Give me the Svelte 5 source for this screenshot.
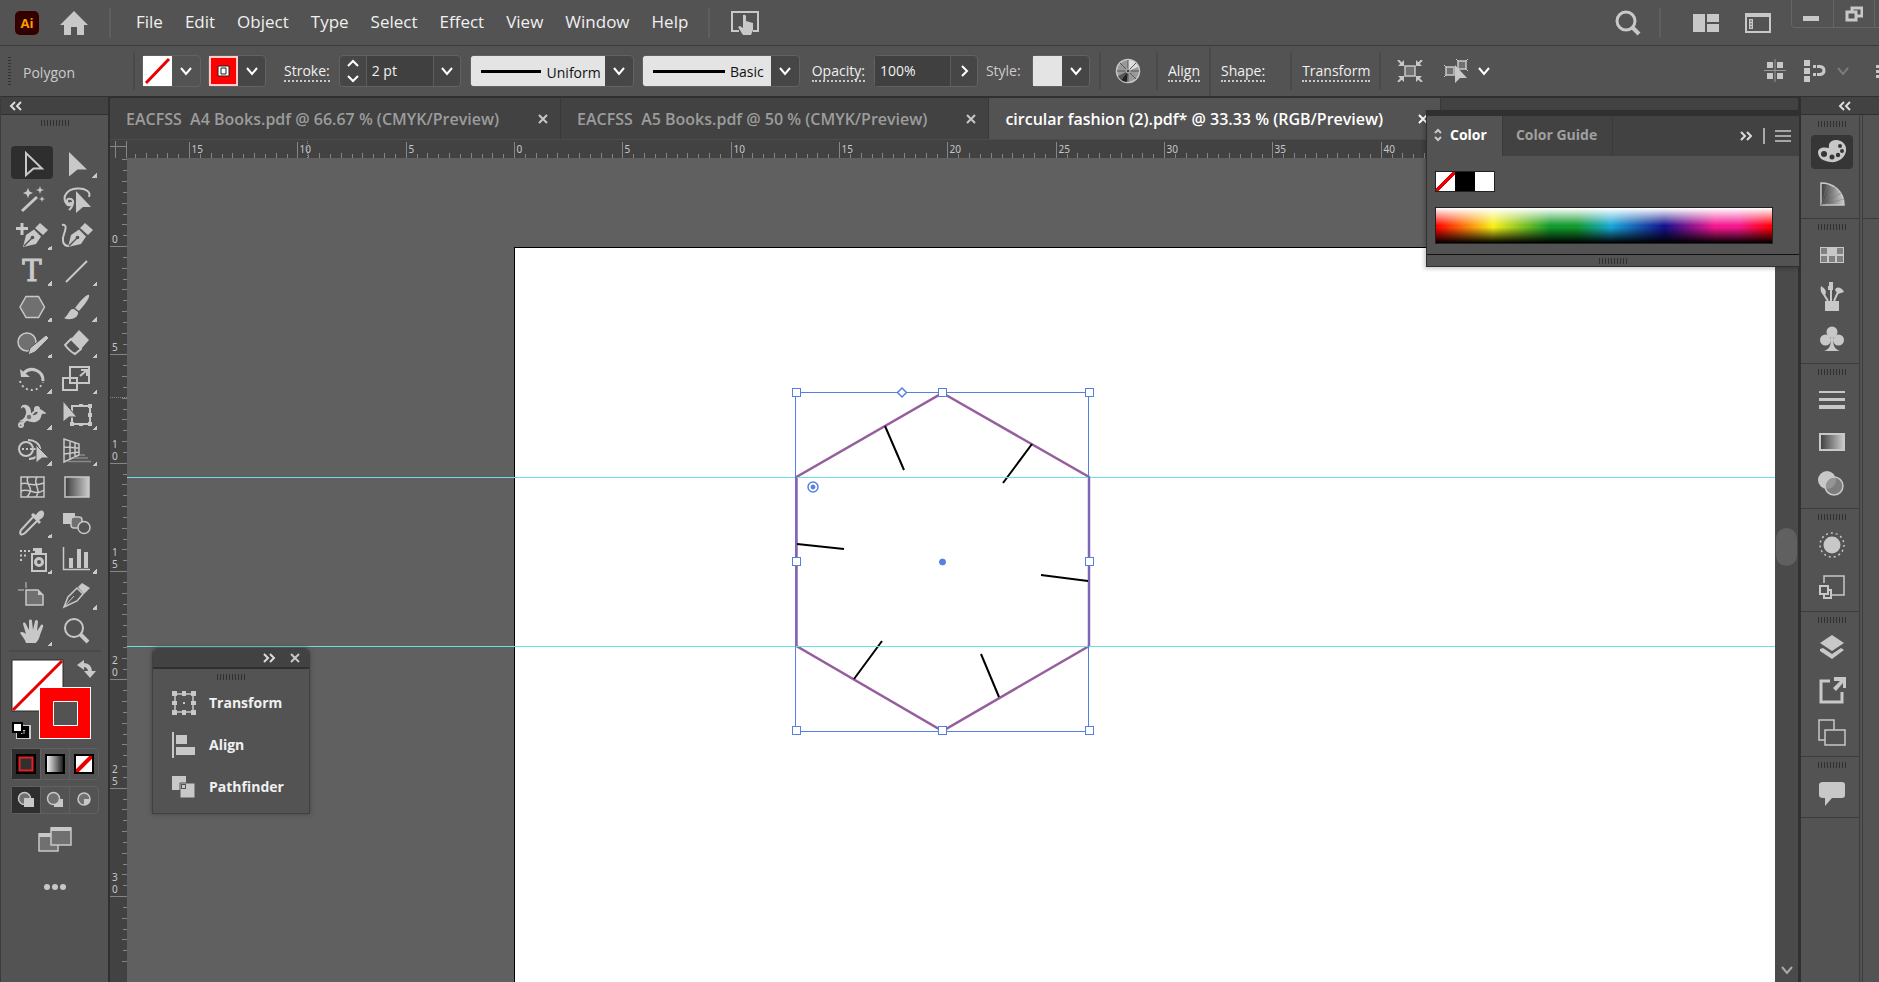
<script lang="ts">
type Item = { name: string; icon: string; more?: boolean };

const menus = ['File', 'Edit', 'Object', 'Type', 'Select', 'Effect', 'View', 'Window', 'Help'];

const tabs = [
  'EACFSS  A4 Books.pdf @ 66.67 % (CMYK/Preview)',
  'EACFSS  A5 Books.pdf @ 50 % (CMYK/Preview)',
  'circular fashion (2).pdf* @ 33.33 % (RGB/Preview)',
];

let activeTab = $state(2);
let activeTool = $state('Selection');
let strokeWidth = $state('2 pt');
let opacity = $state('100%');
let canvasWidth = $state(0);
let canvasHeight = $state(0);

const nib =
  '<path d="M7 28 10 16 18 10.500 25 17.500 20 25Z M19 9 24 4 32 11 27 16Z" /><path d="M8 27 16 19" stroke="#535353" stroke-width="1.500" /><circle cx="16.500" cy="18.500" r="1.800" fill="#535353" />';

const tools: Item[] = [
  { name: 'Selection', icon: '<path d="M10 6V28L17.500 21.500H26Z" class="line" />' },
  { name: 'Direct Selection', more: true, icon: '<path d="M8 5V29.500L16.500 22.500H26Z" />' },
  {
    name: 'Magic Wand',
    icon: '<path d="M6 28 21 14" class="line" stroke-width="3" /><path d="M12 5 13.500 8.500 17 10 13.500 11.500 12 15 10.500 11.500 7 10 10.500 8.500Z M24 3 25 6 28 7 25 8 24 11 23 8 20 7 23 6Z M26 13 26.800 15.200 29 16 26.800 16.800 26 19 25.200 16.800 23 16 25.200 15.200Z" />',
  },
  {
    name: 'Lasso',
    icon: '<path d="M5 20C1 14 6 6 16 5.500 25 5 30 9 28 14M5 20C7 24 13 22 12 18 11 15 6 15 6 18 6 21 10 21 10 19M12 19C12 24 10 25 8 27" class="line" /><path d="M15 8V30L22 24H30Z" />',
  },
  { name: 'Pen', more: true, icon: `<path d="M0 9.500H12M6 4V16" class="line" stroke-width="3" />${nib}` },
  { name: 'Curvature', icon: `<path d="M1 6C6 5 5 10 3 15S1 27 8 27" class="line" />${nib}` },
  {
    name: 'Type',
    more: true,
    icon: '<text x="16" y="26" text-anchor="middle" font-family="DejaVu Serif, serif" font-size="29" stroke="#c8c8c8" stroke-width="1">T</text>',
  },
  { name: 'Line Segment', more: true, icon: '<path d="M5 27 26 6" class="line" />' },
  { name: 'Polygon', more: true, icon: '<path d="M4 16 10 5.500H22.500L28.500 16 22.500 26.500H10Z" class="shade" />' },
  {
    name: 'Paintbrush',
    more: true,
    icon: '<path d="M28 4C26 3 21 8 14 17L18 20C24 13 29 7 28 4Z" /><path d="M13 18C8 17 8 24 3 27 9 30 18 27 17 21Z" />',
  },
  {
    name: 'Shaper',
    more: true,
    icon: '<circle cx="11" cy="15" r="9" class="shade" /><path d="M30 8 33 11 19 25 12 28 14 21Z" stroke="#535353" />',
  },
  {
    name: 'Eraser',
    more: true,
    icon: '<path d="M18 3 28 13 20 22 10 12Z" /><path d="M10 12 4 18C7 22 10 25 14 27L20 22Z" class="line" />',
  },
  {
    name: 'Rotate',
    more: true,
    icon: '<path d="M8 10A11 11 0 0 1 27 18" class="line" stroke-width="3" /><path d="M4 6 5 14 14 14Z" /><path d="M4 18A12 12 0 0 0 27 19" class="line" stroke-dasharray="2 3" />',
  },
  {
    name: 'Scale',
    more: true,
    icon: '<path d="M9 4H28V20H9ZM2 15H16V27H2ZM19 13 25 8M20 7H26V13" class="line" />',
  },
  {
    name: 'Width',
    more: true,
    icon: '<path d="M5 10C4 4 15 4 15 13 15 18 22 17 22 11 24 8 27 12 30 14 29 17 26 12 25 18 23 24 16 24 12 22 9 21 6 24 3 22 7 21 11 17 10 12 9 8 7 7 5 10Z" /><path d="M5 26 22 9" class="line" stroke="#c8c8c8" /><circle cx="5" cy="26" r="2" class="line" /><circle cx="21" cy="10" r="2" class="line" /><circle cx="13" cy="18" r="3" class="shade" />',
  },
  {
    name: 'Free Transform',
    more: true,
    icon: '<path d="M11 7H29V25H11Z" class="line" /><path d="M2 2V23L8 18H16Z" stroke="#535353" /><path d="M18 5H22V8H18ZM27 5H31V9H27ZM27 14H31V18H27ZM27 23H31V27H27ZM18 24H22V27H18ZM9 23H13V27H9Z" />',
  },
  {
    name: 'Shape Builder',
    more: true,
    icon: '<path d="M12 5A11 9 0 1 1 13 24" class="line" /><circle cx="10" cy="14" r="7" class="line" /><path d="M6 14H24" class="line" stroke-dasharray="2 2" /><path d="M20 10V28L26 23H33Z" stroke="#535353" />',
  },
  {
    name: 'Perspective Grid',
    more: true,
    icon: '<path d="M3 4V27L18 20V9ZM3 12 18 13M3 19 18 17M9 7V24M14 8V22" class="line" stroke-width="1.500" /><path d="M19 20H24M13 23H27M7 26.500H30" stroke="#888" stroke-width="1.500" />',
  },
  {
    name: 'Mesh',
    icon: '<path d="M5 6H28V26H5ZM5 13C12 10 14 17 28 12M5 20C14 16 18 26 28 19M12 6C8 14 20 16 11 26M21 6C16 13 26 18 20 26" class="line" stroke-width="1.500" />',
  },
  { name: 'Gradient', icon: '<path d="M4 6H28V26H4Z" fill="url(#ramp)" stroke="#c8c8c8" stroke-width="1.500" />' },
  {
    name: 'Eyedropper',
    more: true,
    icon: '<path d="M18 9 5 23C3 27 5 29 9 26L22 13" class="line" /><path d="M15 8 17 6 20 8C23 2 29 2 28 8 27 11 25 12 23 13L25 15 23 17Z" />',
  },
  {
    name: 'Blend',
    icon: '<path d="M2 6H14V17H2Z" /><rect x="10" y="10" width="11" height="11" rx="3" class="shade" /><circle cx="23" cy="20.500" r="6" fill="#535353" stroke="#c8c8c8" stroke-width="1.500" />',
  },
  {
    name: 'Symbol Sprayer',
    more: true,
    icon: '<path d="M4 8H16M4 12.500H12M4 17H7" class="line" stroke-dasharray="2 2" /><path d="M16 11H30V28H16Z" class="line" /><path d="M19 5H26V10H19ZM17 5H19V8H17Z" /><circle cx="23" cy="19" r="3.500" class="line" stroke-width="3" />',
  },
  {
    name: 'Column Graph',
    more: true,
    icon: '<path d="M2.500 4V26.500H29" class="line" stroke-width="1.500" /><path d="M8 15H12V25H8ZM16 6H20V25H16ZM23 9H27V25H23Z" />',
  },
  {
    name: 'Artboard',
    icon: '<path d="M10 11H22L27 16V26H10Z" class="shade" /><path d="M2 11H8M10 3V9" class="line" stroke-width="1" /><path d="M22 11V16H27Z" />',
  },
  {
    name: 'Slice',
    more: true,
    icon: '<path d="M3 28 7 18 16 9 22 15 16 22Z" class="line" stroke-width="1.500" /><path d="M17 8 21 4 29 9 23 15Z" /><path d="M3 28 13 17" class="line" stroke-width="1" />',
  },
  {
    name: 'Hand',
    more: true,
    icon: '<path d="M10 28C9 24 6 21 4 18 5 16 8 17 10 19L7 9C7 7 9 7 10 9L13 15 13 6C13 4 16 4 16 6L17 15 19 6C20 4 22 5 22 7L21 16 25 10C26 9 28 10 27 12L24 20C23 25 21 26 20 28Z" />',
  },
  {
    name: 'Zoom',
    icon: '<circle cx="13" cy="13" r="9" class="line" /><path d="M19.500 19.500 27 27" class="line" stroke-width="4" />',
  },
];

const dock: Item[][] = [
  [
    {
      name: 'Color',
      icon: '<path d="M13 12C12 5 17 4 21 4 27 5 31 9 30 15 29 22 22 27 14 26 7 25 2 22 2 16 3 11 8 11 13 12Z" /><g fill="#363636"><circle cx="8" cy="18" r="3" /><circle cx="16" cy="21" r="2.500" /><circle cx="22" cy="19" r="2.200" /><circle cx="26" cy="15" r="2" /><circle cx="24" cy="10" r="2" /></g>',
    },
    {
      name: 'Color Guide',
      icon: '<path d="M5 5C17 5 28 13 28 27H5Z" fill="url(#ramp)" stroke="#c8c8c8" stroke-width="1.500" /><path d="M5 27 12 6M5 27 19 9M5 27 25 15M5 27 28 21" stroke="#777" stroke-width=".5" />',
    },
  ],
  [
    {
      name: 'Swatches',
      icon: '<path d="M4 8H28V24H4Z" /><path d="M5 9H11V15H5ZM21 9H27V15H21ZM5 17H11V23H5ZM13 17H19V23H13ZM21 17H27V23H21Z" fill="#808080" />',
    },
    {
      name: 'Brushes',
      icon: '<path d="M9 20H23V30H9ZM13 1H17V9H12V5H13Z" /><path d="M15 9V20M7 12 12 20M22 11 18 20" class="line" /><path d="M5 5C10 8 11 11 9 14 5 13 4 10 5 5ZM19 9C20 5 26 6 28 11L22 13Z" />',
    },
    {
      name: 'Symbols',
      icon: '<circle cx="16" cy="9" r="5.500" /><circle cx="9.500" cy="17" r="5.500" /><circle cx="22.500" cy="17" r="5.500" /><path d="M15 14H17C17 22 18 26 24 28H8C14 26 15 22 15 14Z" />',
    },
  ],
  [
    { name: 'Stroke', icon: '<path d="M3 7H29V9H3ZM3 14H29V17H3ZM3 21H29V25H3Z" />' },
    { name: 'Gradient Panel', icon: '<path d="M4 8H28V24H4Z" fill="url(#ramp)" stroke="#c8c8c8" stroke-width="2" />' },
    {
      name: 'Transparency',
      icon: '<circle cx="11" cy="12" r="9" /><circle cx="18" cy="18" r="9" fill="#888" fill-opacity=".8" stroke="#c8c8c8" stroke-width="1.500" />',
    },
  ],
  [
    {
      name: 'Appearance',
      icon: '<circle cx="16" cy="16" r="8.500" /><circle cx="16" cy="16" r="12" class="line" stroke-width="1.500" stroke-dasharray="2 3" />',
    },
    { name: 'Graphic Styles', icon: '<path d="M8 12V5H28V24H16" class="line" stroke-width="1.500" /><path d="M4 15H12V23H4ZM8 23V27H15V19H12" class="line" />' },
  ],
  [
    { name: 'Layers', icon: '<path d="M16 3 28 11 16 19 4 11Z M4 17 7 16 16 22 25 16 28 18 16 27 4 19Z" />' },
    { name: 'Asset Export', icon: '<path d="M14 7H5V28H26V18" class="line" stroke-width="3" /><path d="M18 3H30V14H27V9L20 17 17 14 24 7H18Z" />' },
    { name: 'Artboards', icon: '<path d="M9 24H3V4H18V14M9 14H29V29H9Z" class="line" stroke-width="1.500" />' },
  ],
  [{ name: 'Comments', icon: '<path d="M7 5H26Q29 5 29 8V18Q29 21 26 21H16L9 29V21H7Q3 21 3 18V8Q3 5 7 5Z" />' }],
];

const floating: Item[] = [
  {
    name: 'Transform',
    icon: '<path d="M7 7H25V25H7Z" class="line" stroke-width="1.500" /><path d="M4 4H9V9H4ZM14 4H18V9H14ZM23 4H28V9H23ZM4 14H9V18H4ZM23 14H28V18H23ZM4 23H9V28H4ZM14 23H18V28H14ZM23 23H28V28H23ZM15 15H17V17H15Z" />',
  },
  { name: 'Align', icon: '<path d="M4 3H6V29H4ZM8 6H19V15H8ZM8 18H27V26H8Z" />' },
  {
    name: 'Pathfinder',
    icon: '<path d="M4 5H18V19H4Z" /><path d="M12 12H27V27H12Z" stroke="#535353" /><path d="M13 13H18V18H13Z" fill="#535353" /><path d="M14 14H17V17H14Z" />',
  },
];

// Ruler geometry, in screen pixels. Ten divisions for every five units.
const step = 65 / 6;
const originX = 387;
const originY = 88;
const isMajor = (i: number) => i % 10 === 0;

function ticks(origin: number, length: number) {
  const first = -Math.floor(origin / step);
  const last = Math.floor((length - 12 - origin) / step);
  return Array.from({ length: Math.max(0, last - first + 1) }, (_, n) => first + n);
}

const xTicks = $derived(ticks(originX, canvasWidth));
const yTicks = $derived(ticks(originY, canvasHeight));

const cuts = [
  [370, 179, 389, 223],
  [517, 197, 488, 236],
  [282, 297, 329, 302],
  [526, 328, 573, 334],
  [367, 394, 339, 432],
  [466, 407, 484, 450],
];

const handles = [
  [281, 146], [427, 146], [574, 146],
  [281, 315], [574, 315],
  [281, 484], [427, 484], [574, 484],
];
</script>

{#snippet chevron()}
  <svg class="chevron" viewBox="0 0 14 14" aria-hidden="true"><path d="M2 4 7 10 12 4" /></svg>
{/snippet}

{#snippet double(back = false)}
  <svg class="double" viewBox="0 0 14 10" aria-hidden="true">
    <path d={back ? 'M6 1 2 5 6 9M12 1 8 5 12 9' : 'M2 1 6 5 2 9M8 1 12 5 8 9'} />
  </svg>
{/snippet}

{#snippet cross()}
  <svg class="cross" viewBox="0 0 12 12" aria-hidden="true"><path d="M2 2 10 10M10 2 2 10" /></svg>
{/snippet}

{#snippet glyph(icon: string)}
  <svg class="glyph" viewBox="0 0 32 32" aria-hidden="true">{@html icon}</svg>
{/snippet}

<svg class="defs" aria-hidden="true">
  <defs>
    <linearGradient id="ramp"><stop stop-color="#3c3c3c" /><stop offset="1" stop-color="#ccc" /></linearGradient>
    <linearGradient id="ramp-light"><stop stop-color="#fff" /><stop offset="1" stop-color="#111" /></linearGradient>
  </defs>
</svg>

<div class="app">
  <header class="menubar">
    <span class="logo">Ai</span>
    <button type="button" class="home" aria-label="Home">
      <svg width="28" height="26" viewBox="0 0 28 26"><path d="M14 1 28 15H24V25H17V17H11V25H4V15H0Z" /></svg>
    </button>
    <span class="rule"></span>
    <nav>
      {#each menus as menu}
        <button type="button">{menu}</button>
      {/each}
    </nav>
    <span class="rule"></span>
    <button type="button" class="touch" aria-label="Touch workspace">
      <svg width="28" height="24" viewBox="0 0 28 24">
        <path d="M8 20H1V1H27V20H22" class="line" />
        <path d="M12 4Q14 3 15 5V10L22 12V19L20 24H12L7 16 9 15 12 17Z" />
      </svg>
    </button>
    <div class="window-side">
      <button type="button" aria-label="Search">
        <svg width="26" height="26" viewBox="0 0 26 26">
          <circle cx="11" cy="11" r="9" class="line" stroke-width="3" /><path d="M17 17 24 24" class="line" stroke-width="4" />
        </svg>
      </button>
      <span class="rule"></span>
      <button type="button" aria-label="Arrange documents">
        <svg width="26" height="18" viewBox="0 0 26 18"><path d="M0 0H12V18H0ZM14 0H26V8H14ZM14 10H26V18H14Z" /></svg>
      </button>
      <button type="button" aria-label="Switch workspace">
        <svg width="26" height="20" viewBox="0 0 26 20">
          <path d="M1 1H25V19H1Z" class="line" /><path d="M1 1H25V4H1ZM4 6H8V16H4Z" /><path d="M5 8H7M5 11H7M5 14H7" stroke="#535353" />
        </svg>
      </button>
      <div class="window-buttons">
        <button type="button" aria-label="Minimize">
          <svg width="16" height="16" viewBox="0 0 16 16"><path d="M0 10H16V15H0Z" /></svg>
        </button>
        <button type="button" aria-label="Restore">
          <svg width="18" height="16" viewBox="0 0 18 16"><path d="M7 5V2H17V10H12M2 6H11V14H2Z" class="line" stroke-width="3" /></svg>
        </button>
      </div>
    </div>
  </header>

  <section class="controlbar" aria-label="Control">
    <span class="dots"></span>
    <span class="kind">Polygon</span>
    <span class="rule"></span>
    <button type="button" class="field fill-picker" aria-label="Fill">
      <svg class="chip" viewBox="0 0 29 30"><path d="M0 0H29V30H0Z" fill="#fff" /><path d="M3 27 26 3" stroke="#e60000" stroke-width="3" /></svg>
      {@render chevron()}
    </button>
    <button type="button" class="field stroke-picker" aria-label="Stroke color">
      <svg class="chip" viewBox="0 0 29 30">
        <path d="M1 1H28V29H1Z" fill="red" stroke="#fcc" stroke-width="2" /><path d="M9 10H20V20H9Z" fill="#fff" stroke="#222" /><path d="M12 12H17V18H12Z" fill="#fff" stroke="#222" />
      </svg>
      {@render chevron()}
    </button>
    <label class="link" for="stroke-width">Stroke:</label>
    <div class="field stepper">
      <button type="button" aria-label="Change stroke width">
        <svg width="14" height="24" viewBox="0 0 14 24"><path d="M2 7 7 2 12 7M2 17 7 22 12 17" class="line" stroke="#fff" /></svg>
      </button>
      <input id="stroke-width" type="text" bind:value={strokeWidth} />
      <button type="button" aria-label="Stroke presets">{@render chevron()}</button>
    </div>
    <div class="field profile">
      <span class="profile-line"></span>
      <select aria-label="Width profile"><option>Uniform</option></select>
      {@render chevron()}
    </div>
    <div class="field profile brush">
      <span class="profile-line"></span>
      <select aria-label="Brush definition"><option>Basic</option></select>
      {@render chevron()}
    </div>
    <label class="link opacity-label" for="opacity">Opacity:</label>
    <div class="field opacity">
      <input id="opacity" type="text" bind:value={opacity} />
      <button type="button" aria-label="Opacity slider">
        <svg width="14" height="14" viewBox="0 0 14 14"><path d="M5 2 10 7 5 12" class="line" stroke="#fff" /></svg>
      </button>
    </div>
    <span class="style-label">Style:</span>
    <button type="button" class="field style-picker" aria-label="Graphic style">
      <span class="chip style-chip"></span>
      {@render chevron()}
    </button>
    <span class="rule wide"></span>
    <button type="button" aria-label="Recolor artwork">
      <svg width="26" height="26" viewBox="0 0 26 26">
        <circle cx="13" cy="13" r="11.500" fill="#999" stroke="#c8c8c8" stroke-width="1.500" />
        <path d="M13 13V2A11 11 0 0 1 23 9Z" fill="#ddd" /><path d="M13 13 6 22A11 11 0 0 0 12 24Z" fill="#222" /><path d="M13 13 3 18A11 11 0 0 0 6 22Z" fill="#555" />
        <path d="M13 2V24M2 13H24M5 5 21 21M21 5 5 21" stroke="#555" /><circle cx="13" cy="13" r="2" fill="#444" stroke="#c8c8c8" />
      </svg>
    </button>
    <span class="rule wide"></span>
    <button type="button" class="link">Align</button>
    <span class="rule tall"></span>
    <button type="button" class="link">Shape:</button>
    <span class="rule gap"></span>
    <button type="button" class="link">Transform</button>
    <span class="rule"></span>
    <button type="button" class="isolate" aria-label="Isolate selected object">
      <svg width="26" height="22" viewBox="0 0 26 22">
        <path d="M8 6H18V16H8Z" class="shade" /><path d="M1 0 5 4M25 0 21 4M1 22 5 18M25 22 21 18" class="line" /><path d="M7 0V6H1ZM19 0V6H25ZM7 22V16H1ZM19 22V16H25Z" />
      </svg>
    </button>
    <button type="button" class="similar" aria-label="Select similar objects">
      <svg width="25" height="24" viewBox="0 0 25 24">
        <path d="M2 8H10V16H2ZM14 2H22V10H14Z" class="shade" /><path d="M0 6 3 9M0 18 3 15M12 0 15 3M24 0 21 3M24 12 21 9" class="line" stroke-width="1" /><path d="M11 6V24L16 19H23Z" />
      </svg>
      {@render chevron()}
    </button>
    <div class="control-side">
      <button type="button" aria-label="Align to pixel grid">
        <svg width="22" height="24" viewBox="0 0 22 24"><path d="M3 3H9V9H3ZM13 3H19V9H13ZM3 14H9V20H3ZM13 14H19V20H13Z" /><path d="M11 0V23M0 11.500H22" stroke="#999" /></svg>
      </button>
      <button type="button" class="snap" aria-label="Snap options">
        <svg width="22" height="22" viewBox="0 0 22 22"><path d="M0 0H6V6H0ZM0 8H6V14H0ZM0 16H6V22H0ZM9 5H12V8H9ZM9 13H12V16H9Z" /><path d="M13 6.500H16Q20 7 20 10.500T16 14.500H13" class="line" stroke-width="3" /></svg>
        {@render chevron()}
      </button>
      <button type="button" aria-label="Control bar menu">
        <svg width="3" height="14" viewBox="0 0 3 14"><path d="M0 1H3V4H0ZM0 6H3V9H0ZM0 11H3V14H0Z" /></svg>
      </button>
    </div>
  </section>

  <main>
    <aside class="tools" aria-label="Tools">
      <button type="button" class="strip collapse" aria-label="Collapse tools">{@render double(true)}</button>
      <span class="grip"></span>
      <div class="tool-grid">
        {#each tools as tool}
          <button
            type="button"
            class="tool"
            class:active={activeTool === tool.name}
            class:more={tool.more}
            aria-label={tool.name}
            onclick={() => (activeTool = tool.name)}
          >
            {@render glyph(tool.icon)}
          </button>
        {/each}
      </div>
      <hr />
      <button type="button" class="paint" aria-label="Fill and stroke">
        <svg width="88" height="80" viewBox="0 0 88 80">
          <path d="M1 1H52V52H1Z" fill="#fff" stroke="#2a2a2a" /><path d="M2 51 51 2" stroke="#e60000" stroke-width="3" />
          <path d="M28 28H80V80H28Z" fill="#fff" /><path d="M29 29H79V79H29Z" fill="red" /><path d="M42.500 42.500H66.500V66.500H42.500Z" fill="#535353" stroke="#fff" />
          <path d="M72 6Q79 6 79 13" class="line" stroke-width="4" /><path d="M66 6 73 1V11ZM73 12H85L79 19Z" />
          <path d="M8 69H17V78H8Z" fill="none" stroke="#c8c8c8" stroke-width="6" /><path d="M8 69H16V77H8Z" fill="none" stroke="#000" stroke-width="4" /><path d="M2 64H11V73H2Z" fill="#fff" stroke="#000" stroke-width="2" />
        </svg>
      </button>
      <div class="triple">
        <button type="button" class="on" aria-label="Color">
          <svg width="20" height="20" viewBox="0 0 20 20"><path d="M0 0H20V20H0Z" fill="#000" /><path d="M3.500 3.500H16.500V16.500H3.500Z" fill="#303030" stroke="#e62020" stroke-width="2" /></svg>
        </button>
        <button type="button" aria-label="Gradient fill">
          <svg width="20" height="20" viewBox="0 0 20 20"><path d="M1 1H19V19H1Z" fill="url(#ramp-light)" stroke="#000" stroke-width="2" /></svg>
        </button>
        <button type="button" aria-label="None">
          <svg width="20" height="20" viewBox="0 0 20 20"><path d="M1 1H19V19H1Z" fill="#fff" /><path d="M2 18 18 2" stroke="#e60000" stroke-width="4" /><path d="M1 1H19V19H1Z" fill="none" stroke="#000" stroke-width="2" /></svg>
        </button>
      </div>
      <div class="triple low">
        <button type="button" class="on" aria-label="Draw normal">
          <svg width="18" height="18" viewBox="0 0 18 18"><circle cx="7.500" cy="7.500" r="6" class="shade" /><path d="M7 7H17V16H7Z" /></svg>
        </button>
        <button type="button" aria-label="Draw behind">
          <svg width="18" height="18" viewBox="0 0 18 18"><path d="M8 8H17V16H8Z" /><circle cx="7.500" cy="7.500" r="6" class="shade" /></svg>
        </button>
        <button type="button" aria-label="Draw inside">
          <svg width="18" height="18" viewBox="0 0 18 18"><circle cx="9" cy="8" r="6" class="shade" /><path d="M9 8H15Q15 14 9 14Z" /></svg>
        </button>
      </div>
      <button type="button" class="screen-mode" aria-label="Change screen mode">
        <svg width="34" height="26" viewBox="0 0 34 26">
          <path d="M1 7H20V24H1Z" class="shade" /><path d="M1 6H20V10H1Z" /><path d="M13 1H33V18H13Z" class="shade" /><path d="M13 0H33V4H13Z" />
        </svg>
      </button>
      <button type="button" class="more-tools" aria-label="Edit toolbar">
        <svg width="22" height="6" viewBox="0 0 22 6"><circle cx="3" cy="3" r="3" /><circle cx="11" cy="3" r="3" /><circle cx="19" cy="3" r="3" /></svg>
      </button>
    </aside>

    <section class="document">
      <div class="tabs" role="tablist">
        {#each tabs as tab, i}
          <div class="tab" class:active={activeTab === i}>
            <button type="button" role="tab" aria-selected={activeTab === i} onclick={() => (activeTab = i)}>{tab}</button>
            <button type="button" aria-label="Close document">{@render cross()}</button>
          </div>
        {/each}
      </div>

      <svg class="ruler corner" aria-hidden="true"><path d="M5.500 1V18M0 6.500H17M16.500 1V18" /></svg>
      <svg class="ruler across" aria-hidden="true">
        {#each xTicks as i}
          {@const x = Math.round(originX + i * step) + 0.5}
          <path d="M{x} {isMajor(i) ? 2 : i % 2 ? 14 : 13}V18" />
          {#if isMajor(i)}<text x={x + 2} y="13">{Math.abs(i / 2)}</text>{/if}
        {/each}
        <path d="M180.500 1V18" stroke-dasharray="1 1" />
      </svg>
      <svg class="ruler down" aria-hidden="true">
        {#each yTicks as i}
          {@const y = Math.round(originY + i * step) + 0.5}
          {@const digits = [...String(Math.abs(i / 2))]}
          <path d="M{isMajor(i) ? 0 : i % 2 ? 13 : 12} {y}H17" />
          {#if isMajor(i)}
            {#each digits as digit, d}
              <text x="2" y={y - 4 - (digits.length - 1 - d) * 12}>{digit}</text>
            {/each}
          {/if}
        {/each}
        <path d="M0 239.500H17" stroke-dasharray="1 1" />
      </svg>

      <div class="canvas" bind:clientWidth={canvasWidth} bind:clientHeight={canvasHeight}>
        <svg class="art" aria-label="Artboard">
          <g transform="translate(388 89)">
            <rect x="-.5" y=".5" width="3000" height="2000" fill="#fff" stroke="#000" />
            <path d="M427.500 146 574 230V399L427.500 484 281.500 399V230Z" fill="none" stroke="#955f9c" stroke-width="2.500" />
            {#each cuts as [x1, y1, x2, y2]}
              <line {x1} {y1} {x2} {y2} stroke="#000" stroke-width="2" />
            {/each}
          </g>
          <path d="M0 319.500H3400M0 488.500H3400" stroke="#6adfe6" />
          <g transform="translate(388 89)" stroke="#5580e0">
            <path d="M280.500 145.500H573.500V484.500H280.500Z" fill="none" />
            <path d="M574 230V399M281 230V399" stroke="#7c68b8" stroke-width="2" />
            {#each handles as [x, y]}
              <rect x={x - 3.5} y={y - 4.5} width="8" height="8" fill="#fff" />
            {/each}
            <path d="M387 141 391.500 145.500 387 150 382.500 145.500Z" fill="#fff" stroke-width="1.500" />
            <circle cx="298" cy="240" r="5" fill="#fff" stroke-width="1.500" />
            <circle cx="298" cy="240" r="2" fill="#5580e0" />
            <circle cx="427.500" cy="315" r="3" fill="#5580e0" />
          </g>
        </svg>

        <section class="floating" aria-label="Panels">
          <header>
            <button type="button" aria-label="Expand panels">{@render double()}</button>
            <button type="button" aria-label="Close panels">{@render cross()}</button>
          </header>
          <span class="grip"></span>
          {#each floating as panel}
            <button type="button" class="panel-row">{@render glyph(panel.icon)}{panel.name}</button>
          {/each}
        </section>
      </div>

      <div class="scrollbar">
        <span class="thumb"></span>
        <button type="button" aria-label="Scroll down">{@render chevron()}</button>
      </div>

      <section class="color-panel" aria-label="Color">
        <header>
          <button type="button" class="color-tab on">
            <svg width="8" height="14" viewBox="0 0 8 14"><path d="M1 5 4 2 7 5M1 9 4 12 7 9" class="line" /></svg>Color
          </button>
          <button type="button" class="color-tab">Color Guide</button>
          <div class="color-actions">
            {@render double()}
            <span class="bar"></span>
            <svg width="16" height="12" viewBox="0 0 16 12"><path d="M0 1H16M0 6H16M0 11H16" class="line" stroke-width="1.500" /></svg>
          </div>
        </header>
        <div class="color-body">
          <div class="swatches">
            <button type="button" class="none" aria-label="None"></button>
            <button type="button" class="black" aria-label="Black"></button>
            <button type="button" class="white" aria-label="White"></button>
          </div>
          <div class="spectrum"></div>
        </div>
        <footer><span class="grip"></span></footer>
      </section>
    </section>

    <aside class="dock" aria-label="Panel dock">
      <button type="button" class="strip" aria-label="Expand dock">{@render double(true)}</button>
      <div class="dock-columns">
        <div class="dock-column">
          {#each dock as group}
            <div class="group">
              <span class="grip"></span>
              {#each group as item}
                <button type="button" class:active={item.name === 'Color'} aria-label={item.name}>{@render glyph(item.icon)}</button>
              {/each}
            </div>
          {/each}
        </div>
        <div class="dock-next"><div></div></div>
      </div>
    </aside>
  </main>
</div>

<style>
  :global(body) {
    background: #535353;
  }

  .app {
    --panel: #535353;
    --dark: #424242;
    --edge: #303030;
    --seam: #3c3c3c;
    --icon: #c8c8c8;
    display: flex;
    flex-direction: column;
    height: 100vh;
    overflow: hidden;
    background: var(--panel);
    color: #f0f0f0;
    font: 14px/20px 'Open Sans', 'Noto Sans', sans-serif;
  }

  .defs {
    position: absolute;
    width: 0;
    height: 0;
  }

  .app,
  .app :global(*) {
    box-sizing: border-box;
  }

  button,
  input,
  select {
    margin: 0;
    padding: 0;
    border: 0;
    background: none;
    color: inherit;
    font: inherit;
  }

  svg {
    display: block;
    flex: none;
    fill: var(--icon);
  }

  .app :global(.line) {
    fill: none;
    stroke: var(--icon);
    stroke-width: 2;
  }

  .app :global(.line[stroke='#fff']) {
    stroke: #fff;
  }

  .app :global(.line[stroke-width='1']) {
    stroke-width: 1;
  }

  .app :global(.line[stroke-width='1.500']) {
    stroke-width: 1.5;
  }

  .app :global(.line[stroke-width='3']) {
    stroke-width: 3;
  }

  .app :global(.line[stroke-width='4']) {
    stroke-width: 4;
  }

  .app :global(.shade) {
    fill: #707070;
    stroke: var(--icon);
    stroke-width: 1.5;
  }

  .glyph {
    width: 32px;
    height: 32px;
    overflow: visible;
  }

  .chevron {
    width: 14px;
    height: 14px;
    fill: none;
    stroke: #fff;
    stroke-width: 2;
  }

  .double {
    width: 14px;
    height: 10px;
    fill: none;
    stroke: #dcdcdc;
    stroke-width: 2;
  }

  .cross {
    width: 12px;
    height: 12px;
    fill: none;
    stroke: #c8c8c8;
    stroke-width: 2;
  }

  .grip {
    width: 28px;
    height: 6px;
    background: repeating-linear-gradient(to right, #303030 0 1px, transparent 1px 3px);
  }

  .rule {
    flex: none;
    width: 2px;
    height: 30px;
    background: #4a4a4a;
  }

  /* Menu bar */
  .menubar {
    display: flex;
    align-items: center;
    flex: none;
    height: 46px;
    padding-left: 15px;
    border-bottom: 1px solid var(--seam);
    font-size: 17px;
    line-height: 24px;
  }

  .menubar .rule {
    background: #5e5e5e;
  }

  .logo {
    width: 24px;
    height: 24px;
    border-radius: 5px;
    background: #300;
    color: #ff9a00;
    font-size: 13px;
    font-weight: 700;
    text-align: center;
  }

  .home {
    margin: 0 21px;
  }

  nav {
    display: flex;
    gap: 22px;
    margin: 0 20px 0 25px;
    padding-bottom: 2px;
  }

  .touch {
    margin-left: 21px;
  }

  .window-side {
    display: flex;
    align-items: center;
    align-self: stretch;
    margin-left: auto;
  }

  .window-side .rule {
    margin: 0 32px 0 18px;
  }

  .window-side > button + button {
    margin-left: 26px;
  }

  .window-buttons {
    display: flex;
    align-self: flex-start;
    height: 28px;
    margin-left: 20px;
    border: solid #666;
    border-width: 0 0 1px 1px;
    border-radius: 0 0 0 4px;
  }

  .window-buttons button {
    width: 42px;
    padding-left: 11px;
    border-right: 1px solid #666;
  }

  .window-buttons button + button {
    width: 41px;
    margin-right: 4px;
  }

  /* Control bar */
  .controlbar {
    display: flex;
    align-items: center;
    flex: none;
    height: 50px;
    padding-left: 8px;
  }

  .dots {
    width: 3px;
    height: 28px;
    background: repeating-linear-gradient(#333 0 1px, transparent 1px 3px);
  }

  .kind {
    width: 110px;
    margin-left: 12px;
    padding-top: 3px;
    color: #ccc;
  }

  .controlbar .rule {
    height: 38px;
  }

  .field {
    display: flex;
    align-items: center;
    height: 32px;
    border: 1px solid #626262;
    border-radius: 4px;
    background: #464646;
  }

  .chip {
    width: 29px;
    height: 30px;
    margin-right: 7px;
  }

  .fill-picker {
    width: 59px;
    margin-left: 7px;
    background: var(--panel);
  }

  .stroke-picker {
    width: 58px;
    margin: 0 18px 0 7px;
  }

  .link {
    padding-top: 1px;
    border-bottom: 2px dotted #c8c8c8;
    line-height: 19px;
    white-space: nowrap;
  }

  .stepper {
    width: 122px;
    margin: 0 9px;
  }

  .field > button {
    display: flex;
    align-items: center;
    justify-content: center;
    align-self: stretch;
    width: 26px;
  }

  .field input {
    align-self: stretch;
    width: 68px;
    padding: 0 5px;
    border: solid #5c5c5c;
    border-width: 0 1px;
    background: #404040;
  }

  .profile {
    width: 164px;
    padding-right: 7px;
    overflow: hidden;
  }

  .profile-line {
    align-self: stretch;
    flex: none;
    width: 70px;
    border: solid #e4e4e4;
    border-width: 14px 0 13px 10px;
    background: #000;
  }

  .profile select {
    appearance: none;
    align-self: stretch;
    flex: 1;
    margin-right: 7px;
    padding: 4px 4px 0 0;
    background: #e4e4e4;
    color: #111;
    text-align-last: right;
  }

  .brush {
    width: 158px;
    margin-left: 8px;
  }

  .brush .profile-line {
    width: 82px;
  }

  .brush select {
    padding: 2px 7px 0 0;
  }

  .opacity-label {
    margin-left: 12px;
  }

  .opacity {
    width: 104px;
    margin: 0 8px 0 9px;
  }

  .opacity input {
    width: 76px;
    border-left: 0;
  }

  .style-label {
    width: 38px;
    color: #ccc;
  }

  .style-picker {
    width: 58px;
    margin: 0 9px 0 8px;
  }

  .style-chip {
    background: #e4e4e4;
  }

  .rule.wide + button:not(.link) {
    margin: 0 15px 0 14px;
  }

  .rule + .link {
    margin: 0 9px 0 10px;
  }

  .controlbar .rule.tall {
    height: 49px;
  }

  .rule.gap {
    margin-left: 16px;
  }

  .isolate {
    margin: 0 21px 0 16px;
  }

  .similar,
  .snap {
    display: flex;
    align-items: center;
    gap: 8px;
  }

  .control-side {
    display: flex;
    align-items: center;
    margin-left: auto;
  }

  .snap {
    gap: 10px;
    margin: 0 26px 0 18px;
  }

  .snap .chevron {
    stroke: #7c7c7c;
  }

  main {
    display: flex;
    flex: 1;
    min-height: 0;
  }

  .strip {
    display: flex;
    align-items: center;
    flex: none;
    height: 19px;
    border: solid var(--edge);
    border-width: 1px 0;
    background: var(--dark);
  }

  /* Tools */
  .tools {
    display: flex;
    flex-direction: column;
    align-items: center;
    flex: none;
    width: 108px;
    border-left: 1px solid var(--seam);
  }

  .collapse {
    align-self: stretch;
    padding-left: 8px;
  }

  .tools > .grip {
    margin-top: 5px;
  }

  .tool-grid {
    display: grid;
    grid-template-columns: 42px 42px;
    grid-auto-rows: 33px;
    gap: 3px;
    margin-top: 20px;
  }

  .tool {
    position: relative;
    display: flex;
    align-items: center;
    justify-content: center;
    border-radius: 4px;
  }

  .tool.active {
    background: #2e2e2e;
  }

  .tool.more::after {
    content: '';
    position: absolute;
    right: 1px;
    bottom: 1px;
    width: 5px;
    height: 5px;
    background: linear-gradient(135deg, transparent 50%, #c8c8c8 50%);
  }

  .tools hr {
    width: 92px;
    height: 2px;
    margin: 3px 0 7px;
    border: 0;
    background: #4a4a4a;
  }

  .triple {
    display: flex;
    width: 88px;
    height: 32px;
    margin-top: 9px;
    border: 1px solid #606060;
    border-radius: 4px;
  }

  .triple.low {
    height: 28px;
    margin-top: 6px;
  }

  .triple button {
    display: grid;
    place-items: center;
    flex: 1;
  }

  .triple button + button {
    border-left: 1px solid #606060;
  }

  .triple .on {
    background: #2e2e2e;
  }

  .screen-mode {
    margin-top: 13px;
  }

  .more-tools {
    margin-top: 31px;
  }

  /* Document */
  .document {
    position: relative;
    display: grid;
    grid-template: 42px 18px minmax(0, 1fr) / 17px minmax(0, 1fr) 23px;
    flex: 1;
    min-width: 0;
    border: solid var(--edge);
    border-width: 2px 3px 0 2px;
    background: var(--dark);
  }

  .tabs {
    display: flex;
    grid-column: 1 / -1;
    min-width: 0;
    border-bottom: 1px solid #4c4c4c;
  }

  .tab {
    display: flex;
    align-items: center;
    gap: 38px;
    padding: 0 11px 0 16px;
    border-right: 1px solid #383838;
    color: #9c9c9c;
    font-size: 16px;
    font-weight: 600;
    white-space: pre;
  }

  .tab.active {
    gap: 34px;
    background: var(--panel);
    color: #fff;
  }

  .tab.active .cross {
    stroke: #fff;
  }

  .ruler {
    width: 100%;
    height: 100%;
    overflow: hidden;
    fill: #c8c8c8;
    stroke: #858585;
    font: 10px/12px 'Noto Sans', sans-serif;
  }

  .ruler text {
    stroke: none;
  }

  .across {
    grid-column: 2 / -1;
  }

  .canvas {
    position: relative;
    min-width: 0;
    overflow: hidden;
    background: #606060;
  }

  .art {
    width: 100%;
    height: 100%;
  }

  .scrollbar {
    display: flex;
    flex-direction: column;
    align-items: center;
    justify-content: space-between;
    padding-bottom: 5px;
    background: #4a4a4a;
  }

  .scrollbar::before {
    content: '';
    flex: 45;
  }

  .scrollbar button {
    display: flex;
    align-items: flex-end;
    flex: 50;
  }

  .scrollbar .chevron {
    stroke: #aaa;
  }

  .thumb {
    width: 21px;
    height: 38px;
    border-radius: 11px;
    background: #606060;
  }

  /* Floating panels */
  .floating {
    position: absolute;
    top: 490px;
    left: 25px;
    display: flex;
    flex-direction: column;
    width: 158px;
    padding-bottom: 5px;
    border: 1px solid #404040;
    border-radius: 6px 6px 0 0;
    background: var(--panel);
    box-shadow: 0 0 5px #444;
    font-weight: 700;
  }

  .floating header {
    display: flex;
    align-items: center;
    justify-content: flex-end;
    gap: 13px;
    height: 20px;
    padding-right: 8px;
    border-bottom: 2px solid var(--edge);
    border-radius: 6px 6px 0 0;
    background: var(--dark);
  }

  .floating .grip {
    align-self: center;
    margin: 5px 0 2px;
  }

  .panel-row {
    display: flex;
    align-items: center;
    gap: 9px;
    height: 42px;
    padding-left: 15px;
  }

  .color-panel {
    position: absolute;
    top: 12px;
    right: -2px;
    width: 374px;
    border: 1px solid var(--edge);
    border-top-width: 6px;
    background: var(--panel);
    box-shadow: -2px 2px 4px #0003;
    font-weight: 700;
  }

  .color-panel header {
    display: flex;
    height: 40px;
    background: var(--dark);
  }

  .color-tab {
    display: flex;
    align-items: center;
    gap: 8px;
    padding: 0 15px 2px 13px;
    border-right: 1px solid #3a3a3a;
    color: #a0a0a0;
  }

  .color-tab.on {
    padding-left: 7px;
    background: var(--panel);
    color: #fff;
  }

  .color-actions {
    display: flex;
    align-items: center;
    gap: 10px;
    margin-left: auto;
    padding-right: 8px;
  }

  .bar {
    width: 2px;
    height: 16px;
    background: #aaa;
  }

  .color-body {
    padding: 15px 26px 10px 8px;
  }

  .swatches {
    display: flex;
    width: 60px;
    height: 21px;
    border: 1px solid #222;
  }

  .swatches button {
    flex: 1;
  }

  .none {
    background: linear-gradient(135deg, #fff 44%, #e60000 44% 56%, #fff 56%);
  }

  .black {
    background: #000;
  }

  .white {
    background: #fff;
  }

  .spectrum {
    height: 37px;
    margin-top: 15px;
    border: 1px solid #222;
    background:
      linear-gradient(#fff, #fff0 50%, #0000 55%, #000),
      linear-gradient(to right, #f00, #f8f018 17%, #129a2c 34% 42%, #18a8d8 52%, #14108c 68%, #f51890 83% 90%, #f00);
  }

  .color-panel footer {
    display: grid;
    place-items: center;
    height: 12px;
    border-top: 1px solid #111;
  }

  /* Dock */
  .dock {
    display: flex;
    flex-direction: column;
    flex: none;
    width: 78px;
  }

  .dock .strip {
    justify-content: flex-end;
    padding-right: 27px;
  }

  .dock-columns {
    display: flex;
    flex: 1;
  }

  .dock-column {
    width: 59px;
    padding-top: 1px;
    border-right: 1px solid var(--seam);
  }

  .group {
    display: flex;
    flex-direction: column;
    align-items: center;
    padding: 5px 0 3px 3px;
    border-bottom: 1px solid var(--seam);
  }

  .group .grip {
    margin-bottom: 4px;
  }

  .group button {
    display: grid;
    place-items: center;
    width: 42px;
    height: 42px;
  }

  .group button.active {
    height: 34px;
    margin: 4px 0;
    border-radius: 4px;
    background: #363636;
  }

  .dock-next {
    flex: 1;
    margin-left: 2px;
    border-left: 1px solid var(--seam);
  }

  .dock-next div {
    height: 104px;
    border-bottom: 1px solid var(--seam);
  }
</style>
